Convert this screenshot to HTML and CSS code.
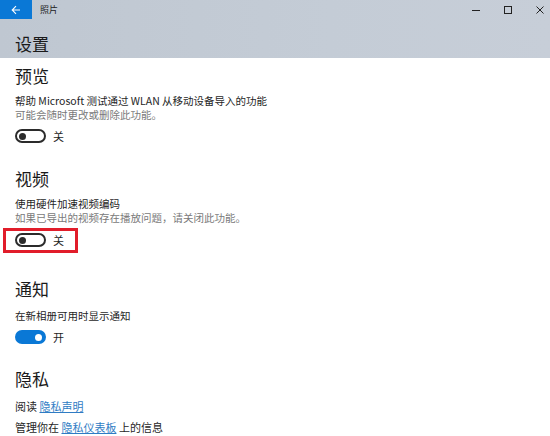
FILE: index.html
```html
<!DOCTYPE html>
<html lang="zh-CN">
<head>
    <meta charset="utf-8">
    <title>照片 - 设置</title>
    <link rel="stylesheet" href="styles.css">
</head>
<body>
    <div class="header">
        <div class="titlebar">
            <div class="back-btn">
                <svg width="10" height="10" viewBox="0 0 10 10"><path d="M9 5H1.5M5 1.2L1.2 5L5 8.8" fill="none" stroke="#fff" stroke-width="1.1"/></svg>
            </div>
            <span class="app-name">照片</span>
            <div class="win-controls">
                <svg width="10" height="10" viewBox="0 0 10 10"><path d="M1 5.5H9" stroke="#222" stroke-width="1"/></svg>
                <svg width="10" height="10" viewBox="0 0 10 10"><rect x="1.5" y="1.5" width="7" height="7" fill="none" stroke="#222" stroke-width="1"/></svg>
                <svg width="10" height="10" viewBox="0 0 10 10"><path d="M1.5 1.5L8.5 8.5M8.5 1.5L1.5 8.5" stroke="#222" stroke-width="1"/></svg>
            </div>
        </div>
        <h1 class="page-title">设置</h1>
    </div>

    <div class="content">
        <div class="section">
            <h2>预览</h2>
            <p class="desc">帮助 Microsoft 测试通过 WLAN 从移动设备导入的功能</p>
            <p class="note">可能会随时更改或删除此功能。</p>
            <div class="toggle-row">
                <span class="toggle"></span>
                <span class="toggle-text">关</span>
            </div>
        </div>

        <div class="section video">
            <h2>视频</h2>
            <p class="desc">使用硬件加速视频编码</p>
            <p class="note">如果已导出的视频存在播放问题，请关闭此功能。</p>
            <div class="toggle-row marked">
                <span class="toggle"></span>
                <span class="toggle-text">关</span>
            </div>
        </div>

        <div class="section notify">
            <h2>通知</h2>
            <p class="desc">在新相册可用时显示通知</p>
            <div class="toggle-row">
                <span class="toggle on"></span>
                <span class="toggle-text">开</span>
            </div>
        </div>

        <div class="section privacy">
            <h2>隐私</h2>
            <p class="link-line">阅读 <a href="#">隐私声明</a></p>
            <p class="link-line">管理你在 <a href="#">隐私仪表板</a> 上的信息</p>
        </div>
    </div>
</body>
</html>
```

FILE: styles.css
```css
body {
    margin: 0;
    font-family: "Noto Sans CJK SC", "Noto Sans", sans-serif;
    color: #1c1c1c;
    background: #fff;
    overflow: hidden;
}
h1, h2, p {
    margin: 0;
    font-weight: 400;
}

/* top area with title bar */
.header {
    height: 58px;
    background: linear-gradient(90deg, #bfc7d1 0%, #c4ccd6 60%, #c7ced8 100%);
}
.titlebar {
    display: flex;
    align-items: center;
    height: 19px;
}
.back-btn {
    width: 32px;
    height: 19px;
    background: #0a78d6;
    display: flex;
    align-items: center;
    justify-content: center;
}
.app-name {
    font-size: 9px;
    margin-left: 8px;
    color: #222;
}
.win-controls {
    margin-left: auto;
    display: flex;
    gap: 22px;
    padding-right: 5px;
}
.page-title {
    font-size: 17px;
    line-height: 24px;
    padding: 13px 0 0 15px;
    color: #1a1a1a;
}

/* settings list */
.content {
    padding-left: 15px;
}
.section h2 {
    font-size: 17px;
    line-height: 24px;
    color: #1a1a1a;
}
.section:first-child {
    padding-top: 6px;
}
.section.video {
    margin-top: 21px;
}
.section.notify {
    margin-top: 27px;
}
.section.privacy {
    margin-top: 20px;
}
.desc {
    font-size: 10.5px;
    line-height: 14px;
    margin-top: 6px;
    color: #1f1f1f;
}
.notify .desc {
    margin-top: 8px;
}
.note {
    font-size: 10.5px;
    line-height: 14px;
    color: #7a7a7a;
}
.toggle-row {
    display: flex;
    align-items: center;
    height: 20px;
    margin-top: 4px;
}
.video .toggle-row {
    margin-top: 5px;
}
.toggle {
    position: relative;
    box-sizing: border-box;
    width: 31px;
    height: 14px;
    border: 2px solid #2b2b2b;
    border-radius: 7px;
}
.toggle::after {
    content: "";
    position: absolute;
    left: 2px;
    top: 1.5px;
    width: 7px;
    height: 7px;
    border-radius: 50%;
    background: #2b2b2b;
}
.toggle.on {
    background: #0a78d6;
    border-color: #0a78d6;
}
.toggle.on::after {
    left: auto;
    right: 2px;
    background: #fff;
}
.toggle-text {
    font-size: 11px;
    margin-left: 7px;
    color: #1f1f1f;
}

/* red frame around the video toggle */
.toggle-row.marked {
    position: relative;
}
.toggle-row.marked::after {
    content: "";
    position: absolute;
    left: -12px;
    top: -2px;
    width: 75px;
    height: 25px;
    box-sizing: border-box;
    border: 3px solid #e11d2a;
}

.link-line {
    font-size: 11px;
    line-height: 21px;
    color: #1f1f1f;
}
.privacy h2 {
    margin-bottom: 5px;
}
.link-line a {
    color: #2f7cc4;
    text-decoration: underline;
}
```
